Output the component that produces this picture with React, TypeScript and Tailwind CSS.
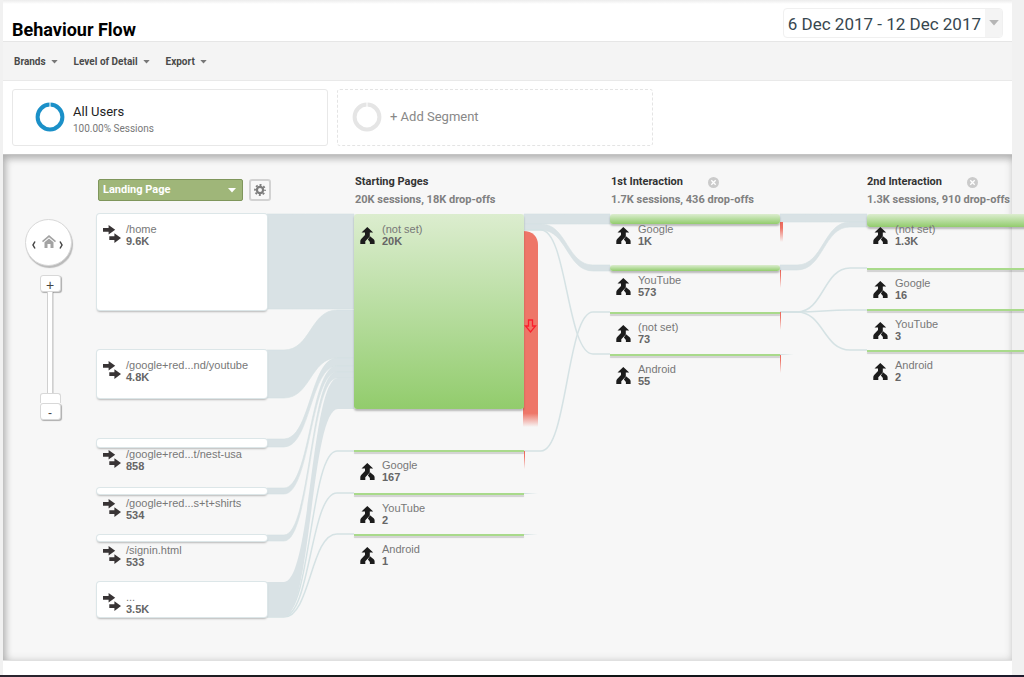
import { useState } from 'react';

type FlowNode = {
  x: number;
  y: number;
  height: number;
  label: string;
  value: string;
  kind: 'page' | 'event';
};

const NODE_WIDTH = 170;

const NODES: FlowNode[] = [
  { x: 94, y: 59, height: 96, label: '/home', value: '9.6K', kind: 'page' },
  { x: 94, y: 195, height: 48, label: '/google+red...nd/youtube', value: '4.8K', kind: 'page' },
  { x: 94, y: 284, height: 8, label: '/google+red...t/nest-usa', value: '858', kind: 'page' },
  { x: 94, y: 333, height: 6, label: '/google+red...s+t+shirts', value: '534', kind: 'page' },
  { x: 94, y: 380, height: 6, label: '/signin.html', value: '533', kind: 'page' },
  { x: 94, y: 427, height: 35, label: '...', value: '3.5K', kind: 'page' },

  { x: 351, y: 59, height: 195, label: '(not set)', value: '20K', kind: 'event' },
  { x: 351, y: 295, height: 2, label: 'Google', value: '167', kind: 'event' },
  { x: 351, y: 338, height: 2, label: 'YouTube', value: '2', kind: 'event' },
  { x: 351, y: 379, height: 2, label: 'Android', value: '1', kind: 'event' },

  { x: 607, y: 59, height: 10, label: 'Google', value: '1K', kind: 'event' },
  { x: 607, y: 110, height: 6, label: 'YouTube', value: '573', kind: 'event' },
  { x: 607, y: 157, height: 2, label: '(not set)', value: '73', kind: 'event' },
  { x: 607, y: 199, height: 2, label: 'Android', value: '55', kind: 'event' },

  { x: 864, y: 59, height: 13, label: '(not set)', value: '1.3K', kind: 'event' },
  { x: 864, y: 113, height: 2, label: 'Google', value: '16', kind: 'event' },
  { x: 864, y: 154, height: 2, label: 'YouTube', value: '3', kind: 'event' },
  { x: 864, y: 195, height: 2, label: 'Android', value: '2', kind: 'event' },
];

// [source x, source y, target x, target y, thickness]
const RIBBONS: [number, number, number, number, number][] = [
  [264, 59, 351, 59, 95],
  [264, 195, 351, 155, 48],
  [264, 284, 351, 203, 8],
  [264, 333, 351, 211, 6],
  [264, 380, 351, 217, 6],
  [521, 59, 607, 59, 10],
  [521, 69, 607, 110, 6],
  [777, 59, 864, 59, 8],
  [777, 110, 864, 67, 5],
];

// [source x, source y, target x, target y]
const THREADS: [number, number, number, number][] = [
  [264, 459, 351, 296],
  [264, 461, 351, 338],
  [264, 462, 351, 379],
  [521, 75, 607, 199],
  [521, 296, 607, 157],
  [777, 157, 864, 113],
  [777, 157, 864, 155],
  [777, 157, 864, 195],
];

// x, y, width, height of the drop-off marks
const DROPS: [number, number, number, number][] = [
  [521, 296, 1, 18],
  [777, 67, 3, 20],
  [777, 115, 1, 18],
  [777, 157, 1, 18],
  [777, 200, 1, 18],
];

const STUBS: [number, number][] = [
  [521, 338],
  [521, 379],
  [777, 199],
];

const COLUMNS = [
  { title: 'Starting Pages', detail: '20K sessions, 18K drop-offs', closable: false },
  { title: '1st Interaction', detail: '1.7K sessions, 436 drop-offs', closable: true },
  { title: '2nd Interaction', detail: '1.3K sessions, 910 drop-offs', closable: true },
];

const BEND = 17;

function ribbonPath([x1, y1, x2, y2, size]: [number, number, number, number, number]) {
  const a = x1 + BEND;
  const b = x2 - BEND;
  const mid = (a + b) / 2;
  return [
    `M${x1} ${y1}H${a}C${mid} ${y1} ${mid} ${y2} ${b} ${y2}H${x2}`,
    `V${y2 + size}H${b}C${mid} ${y2 + size} ${mid} ${y1 + size} ${a} ${y1 + size}H${x1}Z`,
  ].join('');
}

function threadPath([x1, y1, x2, y2]: [number, number, number, number]) {
  const a = x1 + BEND;
  const b = x2 - BEND;
  const mid = (a + b) / 2;
  return `M${x1} ${y1}H${a}C${mid} ${y1} ${mid} ${y2} ${b} ${y2}H${x2}`;
}

function Caret({ className }: { className: string }) {
  return (
    <svg viewBox="0 0 8 5" className={className} fill="currentColor" aria-hidden="true">
      <path d="M0 0H8L4 4.5Z" />
    </svg>
  );
}

function Ring({ className }: { className: string }) {
  return (
    <svg viewBox="0 0 30 30" className={className} fill="none" aria-hidden="true">
      <circle cx="15" cy="15" r="12.4" stroke="currentColor" strokeWidth="4" />
      <path d="M15 0V5" stroke="#fff" strokeWidth="1" />
    </svg>
  );
}

function PageIcon() {
  return (
    <svg viewBox="0 0 18 18" className="h-[18px] w-[18px] shrink-0" fill="#383435" aria-hidden="true">
      <path d="M0 2.9H5.6V0L12.2 4.8L5.6 9.6V6.7H0Z" />
      <path d="M6.3 11.2H11.4V8.3L18 13.1L11.4 17.9V15H6.3Z" />
    </svg>
  );
}

function MergeIcon() {
  return (
    <svg viewBox="0 0 15 18" className="h-[18px] w-[15px] shrink-0" fill="#1c1c1c" aria-hidden="true">
      <path d="M7.3 0L13.2 5.4H9.8V9.4L5.3 14.2V17H0.3V14.2Q0.3 13 1.2 12L5 8V5.4H1.5Z" />
      <path d="M10 9.2L13.7 12.3Q14.6 13.1 14.6 14.2V17H9.9V14.9L7.9 12.4Z" />
    </svg>
  );
}

function Node({ node }: { node: FlowNode }) {
  const isPage = node.kind === 'page';
  const body = isPage
    ? 'bg-white ring-1 ring-[#dce6e8] shadow-[0_2px_2px_rgba(0,0,0,0.25)]'
    : 'bg-linear-to-b from-[#dcedcf] to-[#92cc6c] shadow-[0_2px_2px_rgba(0,0,0,0.25)]';
  const thin = 'bg-[#a9da8b] shadow-[0_2px_1px_rgba(0,0,0,0.16)]';

  return (
    <div className="absolute" style={{ left: node.x, top: node.y, width: NODE_WIDTH }}>
      <div
        className={node.height > 2 ? `rounded-[3px] ${body}` : thin}
        style={{ height: node.height }}
      />
      <div className="absolute top-[9px] left-[6px] flex items-start text-[11px] leading-3 text-[#777]">
        <span className={isPage ? 'mt-[2px] mr-[5px]' : 'mt-1 mr-[7px]'}>
          {isPage ? <PageIcon /> : <MergeIcon />}
        </span>
        <span className="whitespace-nowrap">
          <span className="block">{node.label}</span>
          <strong className="block font-bold text-[#666]">{node.value}</strong>
        </span>
      </div>
    </div>
  );
}

function FlowLinks() {
  return (
    <svg className="absolute top-0 left-0 h-[506px] w-[1021px]" fill="none" aria-hidden="true">
      <defs>
        <linearGradient id="drop" x1="0" y1="0" x2="0" y2="1">
          <stop offset="0" stopColor="#ee6a5e" />
          <stop offset="0.3" stopColor="#ee7467" />
          <stop offset="1" stopColor="#ee7467" stopOpacity="0" />
        </linearGradient>
        <linearGradient id="bigDrop" x1="0" y1="0" x2="0" y2="1">
          <stop offset="0.93" stopColor="#ee7668" />
          <stop offset="1" stopColor="#ee7668" stopOpacity="0" />
        </linearGradient>
        <linearGradient id="stub" x1="0" y1="0" x2="1" y2="0">
          <stop offset="0" stopColor="#d0dfe1" />
          <stop offset="1" stopColor="#d0dfe1" stopOpacity="0" />
        </linearGradient>
      </defs>

      <g fill="#d9e2e5" stroke="#d5e1e3" strokeWidth="0.6">
        {RIBBONS.map((ribbon) => (
          <path key={ribbon.join()} d={ribbonPath(ribbon)} />
        ))}
      </g>
      <g stroke="#d5e2e4" strokeWidth="1.5">
        {THREADS.map((thread) => (
          <path key={thread.join()} d={threadPath(thread)} />
        ))}
      </g>
      {/* the last landing group fans out from one wide band */}
      <path
        d="M264 427H281C308 427 308 223 335 223H351V254H335C308 254 308 462 281 462H264Z"
        fill="#d9e2e5"
      />

      {STUBS.map(([x, y]) => (
        <rect key={`${x}-${y}`} x={x} y={y} width="14" height="1" fill="url(#stub)" />
      ))}
      {DROPS.map(([x, y, width, height]) => (
        <rect key={`${x}-${y}`} x={x} y={y} width={width} height={height} fill="url(#drop)" />
      ))}
      <path d="M520 76C530 76 535 82 535 90V272H520Z" fill="url(#bigDrop)" />
      <path d="M525.5 165H529.5V171H532.5L527.5 177L522.5 171H525.5Z" stroke="#fb1f2c" strokeWidth="1.3" />
    </svg>
  );
}

function MapControls() {
  return (
    <div className="absolute top-[64px] left-[22px] flex w-[47px] flex-col items-center text-[#444]">
      <div className="flex h-[47px] w-[47px] items-center justify-between rounded-full border border-[#d8d8d8] bg-white px-[5px] shadow-[1px_2px_1px_rgba(0,0,0,0.25)]">
        <button type="button" aria-label="Pan left" className="w-2 text-[#444]">
          <svg viewBox="0 0 6 8" className="mt-[5px] h-2 w-[6px]" fill="none" stroke="currentColor" strokeWidth="1.5">
            <path d="M4 0.5L2 4L4 7.5" />
          </svg>
        </button>
        <button type="button" aria-label="Reset view" className="text-[#a3a3a3]">
          <svg viewBox="0 0 14 13" className="mb-[3px] h-[13px] w-[14px]" fill="currentColor">
            <path d="M7 0L14 6L13 7.2L7 2.2L1 7.2L0 6Z" />
            <path d="M2.5 7.2L7 3.4L11.5 7.2V13H8.5V9H5.5V13H2.5Z" />
          </svg>
        </button>
        <button type="button" aria-label="Pan right" className="w-2 text-[#444]">
          <svg viewBox="0 0 6 8" className="mt-[5px] h-2 w-[6px]" fill="none" stroke="currentColor" strokeWidth="1.5">
            <path d="M2 0.5L4 4L2 7.5" />
          </svg>
        </button>
      </div>
      <button
        type="button"
        aria-label="Zoom in"
        className="mt-[9px] ml-[3px] flex h-[17px] w-[21px] items-end justify-center rounded-[3px] border border-[#d8d8d8] bg-white text-sm leading-3 shadow-[1px_1px_1px_rgba(0,0,0,0.3)]"
      >
        +
      </button>
      <div className="ml-[3px] h-[101px] w-[6px] border-x border-[#d0d0d0] bg-white shadow-[1px_0_0_rgba(0,0,0,0.1)]" />
      <div className="ml-[3px] h-[10px] w-[21px] rounded-t-[3px] border border-b-0 border-[#d8d8d8] bg-white" />
      <button
        type="button"
        aria-label="Zoom out"
        className="ml-[3px] flex h-[17px] w-[21px] items-end justify-center rounded-[3px] border border-[#d8d8d8] bg-white text-xs leading-3 shadow-[1px_1px_1px_rgba(0,0,0,0.3)]"
      >
        -
      </button>
    </div>
  );
}

export default function App() {
  const [dimension, setDimension] = useState('Landing Page');

  return (
    <div className="flex min-h-screen flex-col overflow-hidden bg-[#f1f1f1] font-['Liberation_Sans',Arial,sans-serif]">
      <div className="mr-3 ml-[3px] flex flex-1 flex-col bg-white">
        <header className="flex h-[42px] items-end justify-between border-b border-[#e6e6e6] bg-linear-to-b from-[#ececec] to-white to-[4px] pr-[9px] pl-[9px] font-[Roboto,sans-serif]">
          <h1 className="text-lg leading-[22px] font-bold text-black">Behaviour Flow</h1>
          <button
            type="button"
            className="mb-[3px] flex h-[30px] items-stretch overflow-hidden rounded border border-[#f0f0f0] bg-white text-[17px] text-[#37474f]"
          >
            <span className="px-1 leading-[30px]">6 Dec 2017 - 12 Dec 2017</span>
            <span className="flex w-[17px] items-center justify-center bg-[#f4f4f4] text-[#b5b5b5]">
              <Caret className="h-[6px] w-[10px]" />
            </span>
          </button>
        </header>

        <nav className="flex h-[39px] items-center gap-4 border-b border-[#e9e9e9] bg-[#f4f4f4] pt-px pl-[11px] font-[Roboto,sans-serif] text-[10px] font-bold text-[#4a4a4a]">
          {['Brands', 'Level of Detail', 'Export'].map((item) => (
            <button key={item} type="button" className="flex items-center gap-[5px]">
              {item}
              <Caret className="h-1 w-[7px] text-[#777]" />
            </button>
          ))}
        </nav>

        <div className="flex gap-[9px] pt-2 pb-2 pl-[9px] font-[Roboto,sans-serif]">
          <button
            type="button"
            className="flex h-[57px] w-[316px] items-center gap-2 rounded-[3px] border border-[#e8e8e8] pb-[2px] pl-[22px] text-left"
          >
            <Ring className="h-[30px] w-[30px] text-[#1b90c8]" />
            <span className="pt-[6px]">
              <span className="block text-[13px] leading-[18px] text-[#222]">All Users</span>
              <span className="block text-[10px] leading-4 text-[#777]">100.00% Sessions</span>
            </span>
          </button>
          <button
            type="button"
            className="flex h-[57px] w-[316px] items-center gap-2 rounded-[3px] border border-dashed border-[#e4e4e4] pb-[2px] pl-[14px] text-[13px] text-[#888]"
          >
            <Ring className="h-[30px] w-[30px] text-[#e5e5e5]" />
            + Add Segment
          </button>
        </div>

        <main className="relative min-h-[507px] flex-1 border-t border-b border-t-[#c4c4c4] border-b-[#e0e0e0] bg-[#f7f7f7] shadow-[inset_3px_4px_7px_rgba(0,0,0,0.22),inset_0_0_8px_rgba(0,0,0,0.13)]">
          <FlowLinks />
          {NODES.map((node) => (
            <Node key={`${node.x}-${node.y}`} node={node} />
          ))}
          <MapControls />

          <div className="relative flex pt-[18px] pl-[95px] font-[Roboto,sans-serif] text-[11px]">
            <div className="flex w-[257px] shrink-0 gap-[6px] pt-[6px]">
              <div className="relative h-[22px]">
                <select
                  aria-label="Dimension"
                  value={dimension}
                  onChange={(e) => setDimension(e.target.value)}
                  className="h-[22px] w-[145px] appearance-none rounded-[2px] border border-[#7f965c] bg-[#9fb679] pt-px pl-1 font-bold text-white"
                >
                  <option>Landing Page</option>
                </select>
                <Caret className="pointer-events-none absolute top-[9px] right-[7px] h-[5px] w-2 text-white" />
              </div>
              <button
                type="button"
                aria-label="Settings"
                className="flex h-[22px] w-[22px] items-center justify-center rounded-[3px] border-2 border-[#d2d2d2] bg-[#f8f8f8] text-[#7d7d7d]"
              >
                <svg viewBox="0 0 12 12" className="h-3 w-3" fill="none" stroke="currentColor">
                  <circle cx="6" cy="6" r="3.1" strokeWidth="2.2" />
                  <circle cx="6" cy="6" r="5" strokeWidth="1.8" strokeDasharray="1.96 1.96" strokeDashoffset="0.98" />
                </svg>
              </button>
            </div>
            {COLUMNS.map((column) => (
              <div key={column.title} className="w-64 shrink-0 font-bold whitespace-nowrap">
                <div className="flex h-[18px] items-center gap-[25px] text-[#333]">
                  <h2>{column.title}</h2>
                  {column.closable && (
                    <button type="button" aria-label={`Remove ${column.title}`}>
                      <svg viewBox="0 0 11 11" className="h-[11px] w-[11px]" fill="none">
                        <circle cx="5.5" cy="5.5" r="5.5" fill="#cbcbcb" />
                        <path d="M3.3 3.3L7.7 7.7M7.7 3.3L3.3 7.7" stroke="#fff" strokeWidth="1.3" />
                      </svg>
                    </button>
                  )}
                </div>
                <p className="leading-[17px] text-[#808080]">{column.detail}</p>
              </div>
            ))}
          </div>
        </main>
        <div className="h-[14px]" />
      </div>
      <footer className="h-[2px] bg-linear-to-r from-[#2c2530] via-[#0c120f] to-[#1d1a2b]" />
    </div>
  );
}
